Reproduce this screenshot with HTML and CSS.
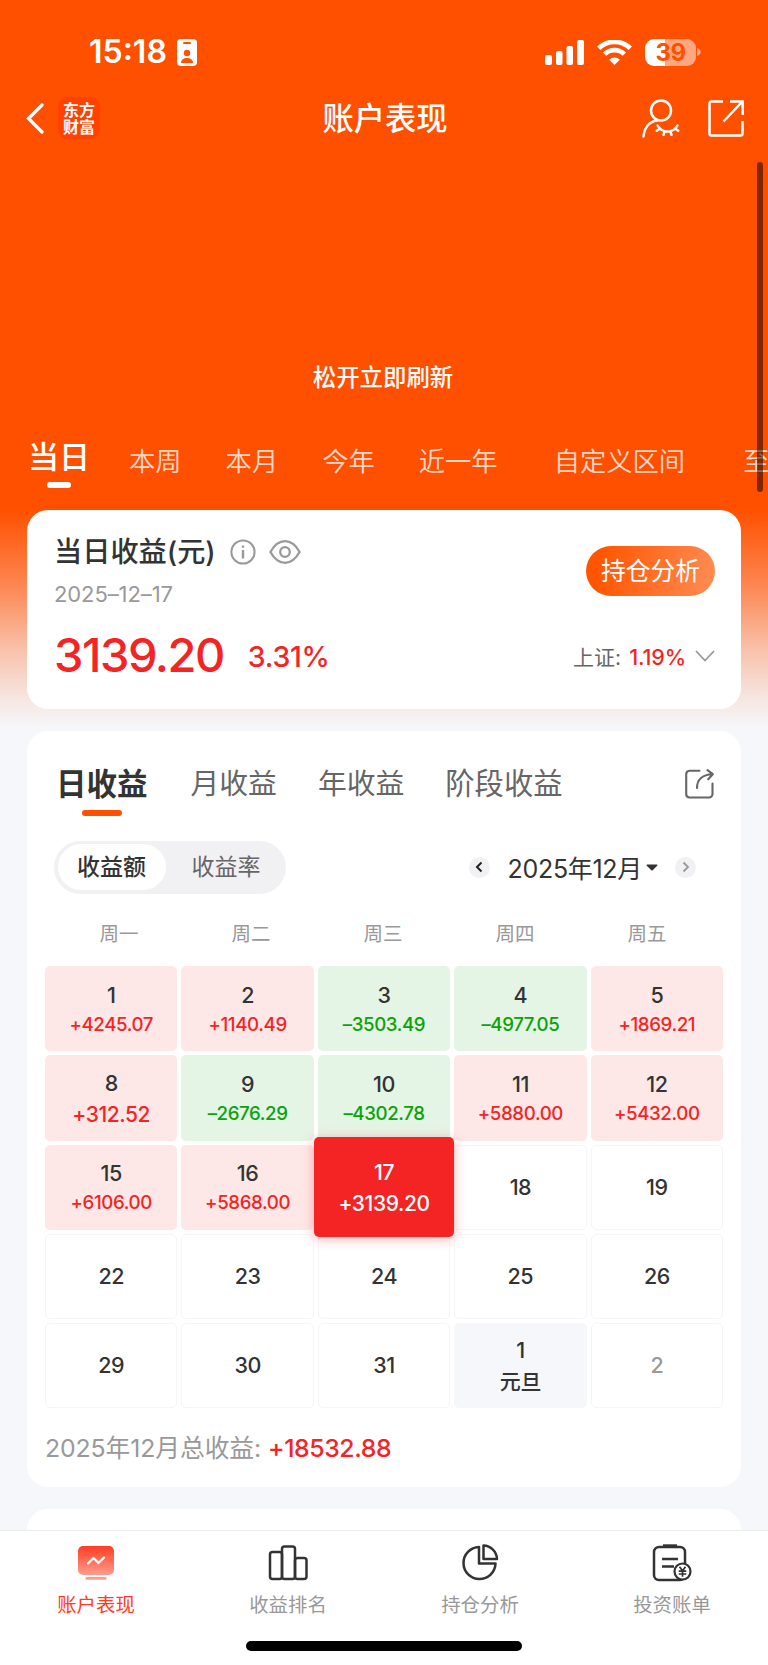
FILE: index.html
```html
<!DOCTYPE html>
<html lang="zh-CN">
<head>
    <meta charset="UTF-8">
    <meta name="viewport" content="width=device-width, initial-scale=1.0">
    <title>账户表现</title>
    <link rel="stylesheet" href="styles.css">
</head>
<body>
    <div class="page">
        <div class="status-bar">
            <div class="status-left">
                <span class="time">15:18</span>
                <svg class="id-badge" width="20" height="27" viewBox="0 0 20 27">
                    <rect width="20" height="27" rx="4" fill="#fff"/>
                    <rect x="6" y="3" width="8" height="2" rx="1" fill="#ff5000"/>
                    <circle cx="10" cy="14" r="3.2" fill="#ff5000"/>
                    <path d="M4 24c0-3.500 3-5 6-5s6 1.500 6 5z" fill="#ff5000"/>
                </svg>
            </div>
            <div class="status-right">
                <svg width="39" height="25" viewBox="0 0 39 25" fill="#fff">
                    <rect x="0" y="15" width="7" height="10" rx="2"/>
                    <rect x="11" y="11" width="6.500" height="14" rx="2"/>
                    <rect x="21.500" y="6" width="6.500" height="19" rx="2"/>
                    <rect x="32" y="0" width="7" height="25" rx="2"/>
                </svg>
                <svg class="wifi" width="35" height="25" viewBox="0 0 35 25">
                    <path d="M1.700 8.300a22.500 22.500 0 0 1 31.600 0" fill="none" stroke="#fff" stroke-width="4.800"/>
                    <path d="M7.600 14.200a14 14 0 0 1 19.800 0" fill="none" stroke="#fff" stroke-width="4.600"/>
                    <path d="M17.500 25l-5.300-5.300a7.600 7.600 0 0 1 10.600 0z" fill="#fff"/>
                </svg>
                <div class="battery">39</div>
                <svg width="4" height="8" viewBox="0 0 4 8"><path d="M0 0c5 1.500 5 6.500 0 8z" fill="#fff" opacity=".5"/></svg>
            </div>
        </div>

        <header>
            <div class="header-left">
                <svg width="18" height="31" viewBox="0 0 18 31"><path d="M16 2L2.500 15.500 16 29" fill="none" stroke="#fff" stroke-width="3.200" stroke-linecap="round"/></svg>
                <div class="logo">东方<br>财富</div>
            </div>
            <div class="title">账户表现</div>
            <div class="header-right">
                <svg width="38" height="39" viewBox="0 0 38 39" fill="none" stroke="#fff" stroke-width="2.500" stroke-linecap="round">
                    <circle cx="19" cy="11.500" r="10"/>
                    <path d="M1.500 37.500c.8-9 6-15.500 14.500-16.300"/>
                    <path d="M15.500 26.500c4.500 8 15.500 8 20 0M17.800 29.600l-3 2.200M22.700 32.200l-1.200 3.600M28.300 32.200l1.200 3.600M33.200 29.600l3 2.200"/>
                </svg>
                <svg width="36" height="37" viewBox="0 0 36 37" fill="none" stroke="#fff" stroke-width="2.500">
                    <path d="M15 1.500H3.500a2 2 0 0 0-2 2v30a2 2 0 0 0 2 2h29a2 2 0 0 0 2-2V21M22 1.500h12.700V15M34 2L15.500 21.500"/>
                </svg>
            </div>
        </header>

        <div class="refresh">松开立即刷新</div>

        <nav class="range-tabs">
            <span class="range active">当日</span>
            <span class="range">本周</span>
            <span class="range">本月</span>
            <span class="range">今年</span>
            <span class="range year">近一年</span>
            <span class="range custom">自定义区间</span>
            <span class="range since">至今</span>
        </nav>

        <main>
            <section class="card summary">
                <div class="summary-top">
                    <div>
                        <div class="summary-title">
                            <span>当日收益(元)</span>
                            <svg class="info" width="26" height="26" viewBox="0 0 26 26" fill="none" stroke="#999" stroke-width="2">
                                <circle cx="13" cy="13" r="11.600"/>
                                <path d="M13 11v8.500M13 6.500v2.200" stroke-width="2.400"/>
                            </svg>
                            <svg width="32" height="24" viewBox="0 0 32 24" fill="none" stroke="#999" stroke-width="2.300">
                                <path d="M1.400 12C5 5.500 10 1.200 16 1.200S27 5.500 30.600 12C27 18.500 22 22.800 16 22.800S5 18.500 1.400 12z"/>
                                <circle cx="16" cy="12" r="4.800"/>
                            </svg>
                        </div>
                        <div class="date">2025–12–17</div>
                    </div>
                    <div class="position-btn">持仓分析</div>
                </div>
                <div class="summary-bottom">
                    <span class="amount">3139.20</span>
                    <span class="percent">3.31%</span>
                    <span class="index-name">上证:</span>
                    <span class="index-value">1.19%</span>
                    <svg width="20" height="12" viewBox="0 0 20 12"><path d="M1 1l9 9.500L19 1" fill="none" stroke="#999" stroke-width="1.800"/></svg>
                </div>
            </section>

            <section class="card calendar">
                <div class="profit-tabs">
                    <span class="profit-tab active">日收益</span>
                    <span class="profit-tab">月收益</span>
                    <span class="profit-tab">年收益</span>
                    <span class="profit-tab stage">阶段收益</span>
                    <svg class="share" width="29" height="30" viewBox="0 0 29 30" fill="none" stroke="#666" stroke-width="2.100" stroke-linecap="round" stroke-linejoin="round">
                        <path d="M14.500 1.800H4.500a3.500 3.500 0 0 0-3.300 3.500V25a3.500 3.500 0 0 0 3.300 3.500H24A3.500 3.500 0 0 0 27.500 25V14.500"/>
                        <path d="M12 19c0-8 5-13.500 15.500-13.800M22.500 1.200l5.300 4-4.600 5"/>
                    </svg>
                </div>

                <div class="toolbar">
                    <div class="segment">
                        <span class="seg active">收益额</span>
                        <span class="seg">收益率</span>
                    </div>
                    <div class="month-picker">
                        <span class="arrow"><svg width="8" height="12" viewBox="0 0 8 12"><path d="M6.500 1.500L2 6l4.500 4.500" fill="none" stroke="#222" stroke-width="2"/></svg></span>
                        <span class="month">2025年12月</span>
                        <svg width="12" height="7" viewBox="0 0 12 7"><path d="M1 .5h10a.6.6 0 0 1 .4 1L6.700 6.200a1 1 0 0 1-1.400 0L.6 1.500A.6.6 0 0 1 1 .5z" fill="#333"/></svg>
                        <span class="arrow next"><svg width="8" height="12" viewBox="0 0 8 12"><path d="M1.500 1.500L6 6l-4.500 4.500" fill="none" stroke="#999" stroke-width="1.800"/></svg></span>
                    </div>
                </div>

                <div class="weekdays">
                    <span>周一</span><span>周二</span><span>周三</span><span>周四</span><span>周五</span>
                </div>

                <div class="days">
                    <div class="day up"><b>1</b><i>+4245.07</i></div>
                    <div class="day up"><b>2</b><i>+1140.49</i></div>
                    <div class="day down"><b>3</b><i>–3503.49</i></div>
                    <div class="day down"><b>4</b><i>–4977.05</i></div>
                    <div class="day up"><b>5</b><i>+1869.21</i></div>

                    <div class="day up large"><b>8</b><i>+312.52</i></div>
                    <div class="day down"><b>9</b><i>–2676.29</i></div>
                    <div class="day down"><b>10</b><i>–4302.78</i></div>
                    <div class="day up"><b>11</b><i>+5880.00</i></div>
                    <div class="day up"><b>12</b><i>+5432.00</i></div>

                    <div class="day up"><b>15</b><i>+6106.00</i></div>
                    <div class="day up"><b>16</b><i>+5868.00</i></div>
                    <div class="day selected"><b>17</b><i>+3139.20</i></div>
                    <div class="day"><b>18</b></div>
                    <div class="day"><b>19</b></div>

                    <div class="day"><b>22</b></div>
                    <div class="day"><b>23</b></div>
                    <div class="day"><b>24</b></div>
                    <div class="day"><b>25</b></div>
                    <div class="day"><b>26</b></div>

                    <div class="day"><b>29</b></div>
                    <div class="day"><b>30</b></div>
                    <div class="day"><b>31</b></div>
                    <div class="day holiday"><b>1</b><i>元旦</i></div>
                    <div class="day other"><b>2</b></div>
                </div>

                <div class="total">2025年12月总收益: <span>+18532.88</span></div>
            </section>

            <section class="card more"></section>
        </main>

        <footer>
            <div class="tabbar">
                <div class="tab active">
                    <svg width="40" height="40" viewBox="0 0 40 40">
                        <defs>
                            <linearGradient id="tabFill" x1="0" y1="0" x2="0" y2="1">
                                <stop offset="0" stop-color="#ff3d22"/>
                                <stop offset="1" stop-color="#ff9c8e"/>
                            </linearGradient>
                        </defs>
                        <rect x="2" y="3" width="36" height="29" rx="5" fill="url(#tabFill)"/>
                        <rect x="9.500" y="34" width="21" height="2.800" rx="1" fill="#ff9c8e"/>
                        <path d="M12 20.500l5.500-5.500 5 5 5.500-5.500" fill="none" stroke="#fff" stroke-width="2.300" stroke-linecap="round" stroke-linejoin="round"/>
                    </svg>
                    <span>账户表现</span>
                </div>
                <div class="tab">
                    <svg width="40" height="40" viewBox="0 0 40 40" fill="none" stroke="#333" stroke-width="2.500">
                        <rect x="2" y="9" width="12" height="27" rx="2.500"/>
                        <rect x="14" y="3.500" width="13" height="32.500" rx="2.500"/>
                        <rect x="27" y="15" width="11.500" height="21" rx="2.500"/>
                    </svg>
                    <span>收益排名</span>
                </div>
                <div class="tab">
                    <svg width="40" height="40" viewBox="0 0 40 40" fill="none" stroke="#333" stroke-width="2.500" stroke-linejoin="round">
                        <path d="M19 4A16 16 0 1 0 35.500 20.500H19z"/>
                        <path d="M23.500 2.500A14 14 0 0 1 37 16H23.500z"/>
                    </svg>
                    <span>持仓分析</span>
                </div>
                <div class="tab">
                    <svg width="40" height="40" viewBox="0 0 40 40" fill="none" stroke="#333" stroke-width="2.500">
                        <rect x="2" y="4" width="31" height="33" rx="5"/>
                        <path d="M11 3h14" stroke-width="3.400"/>
                        <path d="M10 16h16M10 23.500h12"/>
                        <circle cx="30.500" cy="28.500" r="8" fill="#fff" stroke-width="2.200"/>
                        <path d="M27.500 23.800l3 4 3-4M30.500 27.800v6M26.700 28.200h7.600M26.700 31h7.600" stroke-width="1.700"/>
                    </svg>
                    <span>投资账单</span>
                </div>
            </div>
            <div class="home-bar"></div>
        </footer>

        <div class="scrollbar"></div>
    </div>
</body>
</html>
```
FILE: styles.css
```css
:root {
    --orange: #ff5000;
    --red: #f52424;
    --green: #0aa30a;
    --text: #333;
    --gray: #999;
    --background: #f6f7fa;
}

* {
    box-sizing: border-box;
}

body {
    margin: 0;
    font-family: "Inter", "Noto Sans CJK SC", sans-serif;
    color: var(--text);
    background: var(--background);
}

svg {
    display: block;
    flex-shrink: 0;
}

.page {
    position: relative;
    display: flex;
    flex-direction: column;
    width: 768px;
    height: 1665px;
    overflow: hidden;
    background: linear-gradient(180deg, var(--orange) 510px, #fd8650 585px, #f8c2ab 650px, #f6e7e3 700px, var(--background) 728px);
}

.status-bar {
    display: flex;
    justify-content: space-between;
    height: 88px;
    padding: 38px 67px 0 88px;
    color: white;
}

.status-left,
.status-right {
    display: flex;
    align-items: center;
    height: 28px;
}

.time {
    width: 89px;
    padding-left: 1px;
    font-size: 32px;
    font-weight: 600;
    line-height: 28px;
}

.wifi {
    margin: 0 13px;
}

.battery {
    width: 51px;
    height: 27px;
    margin-right: 1px;
    border-radius: 9px;
    background: linear-gradient(90deg, #fff 20px, rgba(255, 255, 255, 0.5) 20px);
    color: var(--orange);
    font-size: 24px;
    font-weight: 700;
    line-height: 27px;
    letter-spacing: -0.5px;
    text-align: center;
}

header {
    display: grid;
    grid-template-columns: 1fr auto 1fr;
    align-items: center;
    height: 60px;
    padding: 0 24px 0 26px;
    color: white;
}

.header-left,
.header-right {
    display: flex;
    align-items: center;
}

.header-left {
    gap: 14px;
}

.logo {
    width: 42px;
    height: 42px;
    padding-top: 4px;
    border-radius: 9px;
    background: #ff4200;
    font-family: "Noto Sans CJK SC", sans-serif;
    font-size: 16px;
    font-weight: 700;
    line-height: 17px;
    text-align: center;
}

.title {
    margin-top: -4px;
    font-size: 31.3px;
    font-weight: 500;
}

.header-right {
    justify-content: flex-end;
    gap: 28px;
}

.refresh {
    margin-top: 213px;
    padding-right: 2px;
    color: white;
    font-size: 23.4px;
    font-weight: 500;
    line-height: 34px;
    text-align: center;
}

.range-tabs {
    display: flex;
    height: 114.5px;
    padding: 46px 0 0 28px;
    white-space: nowrap;
}

.range {
    flex-shrink: 0;
    margin-right: 44px;
    color: rgba(255, 255, 255, 0.8);
    font-size: 26.3px;
    font-weight: 350;
    line-height: 42px;
}

.range.active {
    width: 62px;
    margin: -5px 39px 0 0;
    color: white;
    font-size: 31px;
    font-weight: 500;
}

.range.active::after {
    content: '';
    display: block;
    width: 24px;
    height: 6px;
    margin: 4px auto 0;
    border-radius: 3px;
    background: white;
}

.range.year {
    margin-right: 56px;
}

.range.custom {
    margin-right: 58px;
}

main {
    display: flex;
    flex-direction: column;
    gap: 22px;
    height: 1020.5px;
    padding: 0 27px;
    overflow: hidden;
}

.card {
    flex-shrink: 0;
    background: white;
    border-radius: 21px;
}

.summary {
    height: 199px;
    padding: 24px 26px 0 27px;
}

.summary-top {
    display: flex;
    justify-content: space-between;
    height: 90px;
}

.summary-title {
    display: flex;
    align-items: center;
    height: 36px;
    font-size: 28.2px;
    font-weight: 500;
}

.summary-title span {
    margin-top: -4px;
}

.info {
    margin: 0 13px 0 14px;
}

.date {
    margin-top: 9px;
    color: var(--gray);
    font-size: 22px;
    line-height: 30px;
    letter-spacing: -0.1px;
}

.position-btn {
    width: 129px;
    height: 50px;
    margin-top: 12px;
    border-radius: 25px;
    background: linear-gradient(100deg, #ff5500 10%, #ff8a50 95%);
    color: white;
    font-size: 24.8px;
    line-height: 50px;
    text-align: center;
}

.summary-bottom {
    display: flex;
    align-items: center;
    height: 64px;
}

.amount {
    margin-top: -3px;
    color: var(--red);
    font-size: 47px;
    font-weight: 500;
    letter-spacing: -1.5px;
}

.percent {
    margin: 1px auto 0 24px;
    color: var(--red);
    font-size: 28.5px;
    font-weight: 500;
    letter-spacing: -0.3px;
}

.index-name {
    color: #666;
    font-size: 21px;
}

.index-value {
    margin: 2px 9px 0 8px;
    color: var(--red);
    font-size: 21.5px;
    font-weight: 500;
    letter-spacing: -0.1px;
}

.calendar {
    height: 756px;
    padding: 0 18px;
}

.profit-tabs {
    display: flex;
    height: 110px;
    padding: 31.5px 9px 0 11px;
}

.profit-tab {
    margin-right: 41px;
    color: #666;
    font-size: 28.8px;
    line-height: 44px;
}

.profit-tab.stage {
    font-size: 29.3px;
}

.profit-tab.active {
    margin-right: 43px;
    color: var(--text);
    font-size: 30.5px;
    font-weight: 700;
}

.profit-tab.active::after {
    content: '';
    display: block;
    width: 40px;
    height: 6px;
    margin: 4px auto 0;
    border-radius: 3px;
    background: var(--orange);
}

.share {
    margin: 7px 0 0 auto;
}

.toolbar {
    display: flex;
    justify-content: space-between;
    align-items: center;
    height: 53px;
    padding: 0 27px 0 9px;
}

.segment {
    display: flex;
    width: 232px;
    height: 53px;
    padding: 3.500px;
    border-radius: 27px;
    background: #f1f1f4;
}

.seg {
    flex: 1;
    padding-left: 4px;
    border-radius: 23px;
    color: #666;
    font-size: 23px;
    line-height: 47px;
    text-align: center;
}

.seg.active {
    flex: 0 0 108px;
    padding-left: 0;
    background: white;
    color: var(--text);
    font-weight: 500;
}

.month-picker {
    display: flex;
    align-items: center;
}

.month {
    margin: 0 4px 0 18px;
    font-size: 25px;
    letter-spacing: -0.3px;
}

.arrow {
    display: flex;
    align-items: center;
    justify-content: center;
    width: 21px;
    height: 21px;
    border-radius: 50%;
    background: #f1f1f4;
}

.arrow.next {
    margin-left: 17px;
}

.weekdays {
    display: grid;
    grid-template-columns: repeat(5, 132px);
    height: 72.5px;
    padding: 26px 0 0 8px;
    color: var(--gray);
    font-size: 19.5px;
    line-height: 28px;
    text-align: center;
}

.days {
    display: grid;
    grid-template-columns: repeat(5, 1fr);
    grid-auto-rows: 85.3px;
    gap: 4px;
}

.day {
    display: flex;
    flex-direction: column;
    align-items: center;
    justify-content: center;
    border: 1px solid #f5f5f7;
    border-radius: 5px;
    font-size: 18.7px;
    line-height: 29px;
}

.day b {
    font-size: 21.5px;
    font-weight: 500;
    letter-spacing: -0.5px;
}

.day i {
    font-style: normal;
    font-weight: 500;
    letter-spacing: -0.4px;
}

.day.up,
.day.down,
.day.selected {
    padding-top: 2px;
    border: none;
}

.day.up {
    background: #fde8e7;
}

.day.up i {
    color: var(--red);
}

.day.down {
    background: #e4f4e5;
}

.day.down i {
    color: var(--green);
}

.day.large,
.day.selected {
    font-size: 21px;
    line-height: 31px;
}

.day.selected {
    z-index: 1;
    margin: -7.500px -3.500px;
    background: var(--red);
    color: white;
    box-shadow: 0 2px 12px rgba(245, 36, 36, 0.35);
}

.day.holiday {
    border: none;
    background: var(--background);
    font-size: 21px;
    line-height: 31px;
}

.day.other {
    color: var(--gray);
}

.total {
    margin-top: 22px;
    color: var(--gray);
    font-size: 24.8px;
    line-height: 36px;
    letter-spacing: -0.1px;
}

.total span {
    color: var(--red);
    font-weight: 500;
    letter-spacing: -0.4px;
}

.more {
    height: 200px;
}

footer {
    height: 135px;
    border-top: 1px solid #ebecee;
    background: white;
}

.tabbar {
    display: flex;
    height: 110px;
    padding-top: 12px;
}

.tab {
    display: flex;
    flex: 1;
    flex-direction: column;
    align-items: center;
    gap: 8px;
    color: var(--gray);
    font-size: 19.4px;
    line-height: 28px;
}

.tab.active {
    color: #ff3d22;
}

.home-bar {
    width: 276px;
    height: 10px;
    margin: 0 auto;
    border-radius: 5px;
    background: black;
}

/* sits over the page, at the right edge */
.scrollbar {
    position: absolute;
    top: 162px;
    right: 5px;
    width: 6px;
    height: 330px;
    border-radius: 3px;
    background: rgba(0, 0, 0, 0.5);
}
```
